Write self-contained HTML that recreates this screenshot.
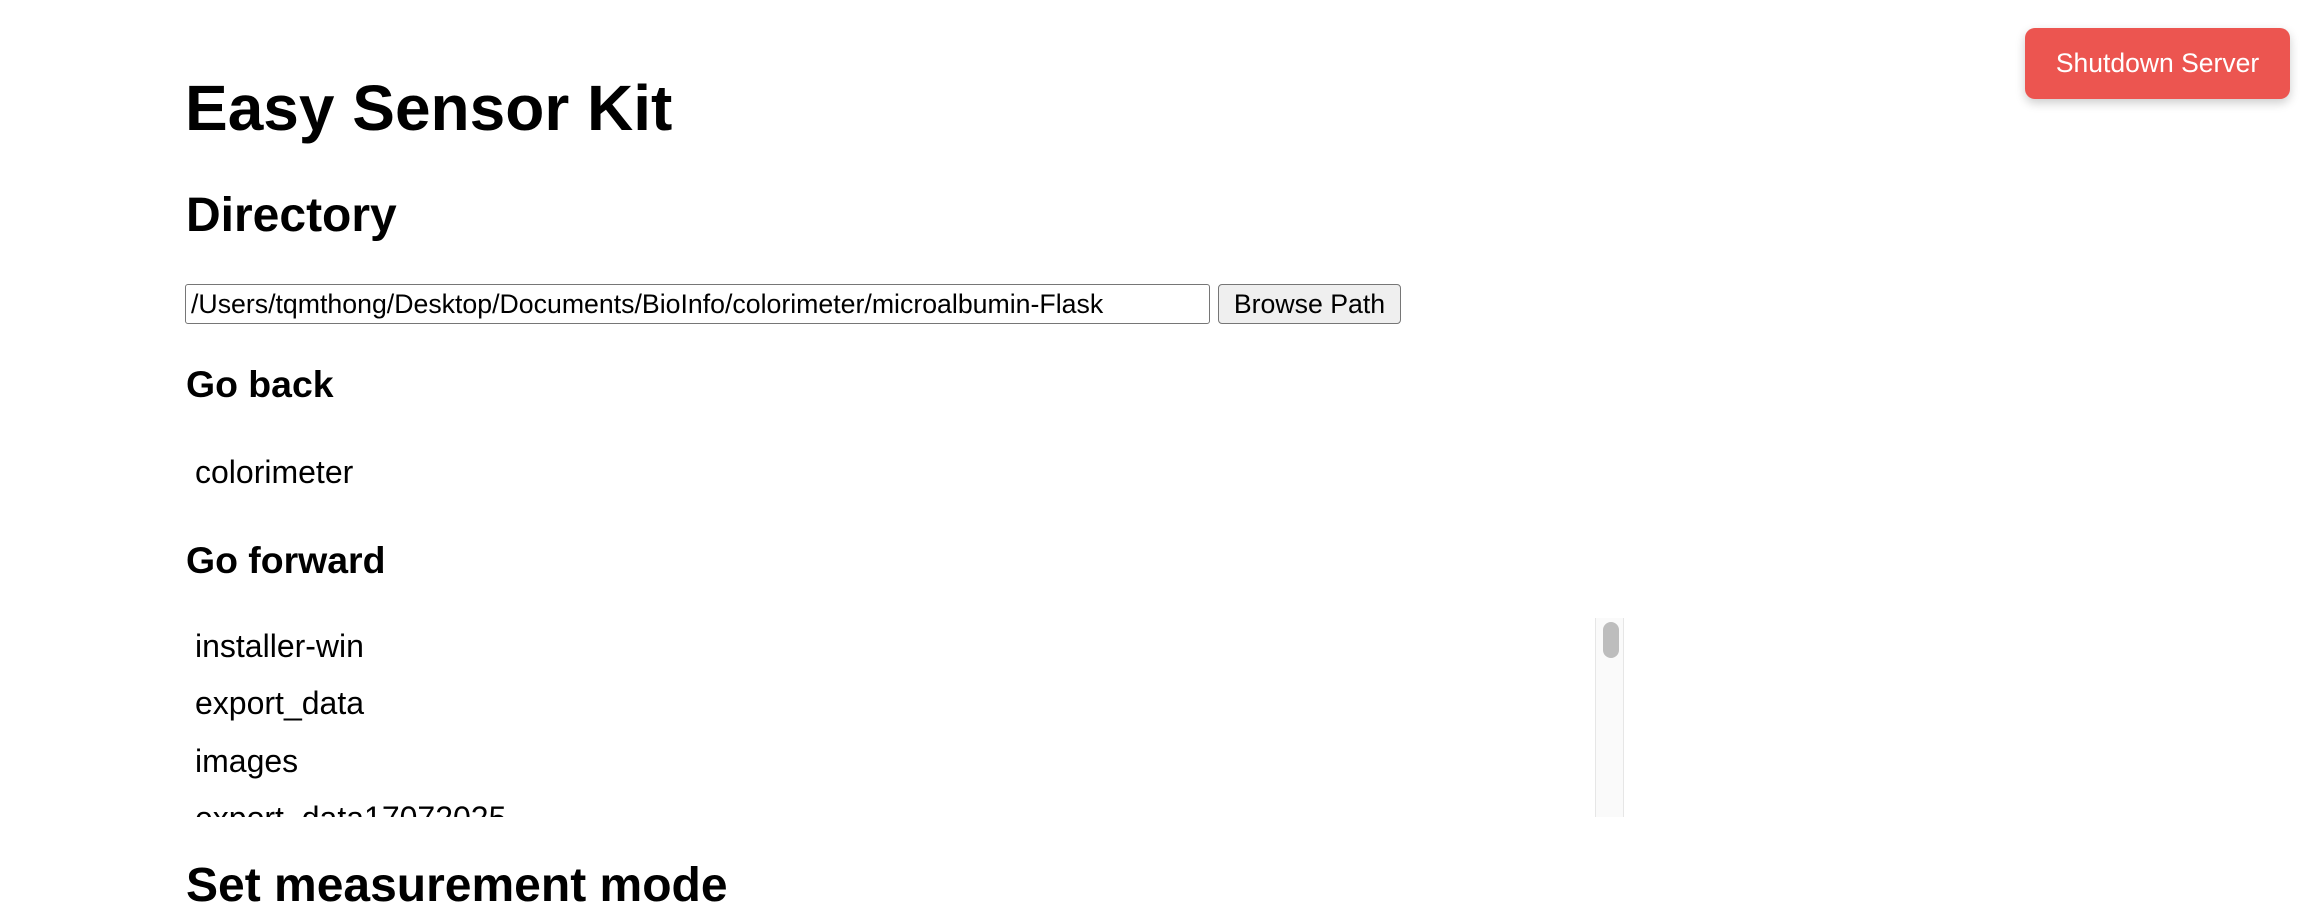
<!DOCTYPE html>
<html><head><meta charset="utf-8"><style>
body{margin:0;width:2312px;height:924px;background:#fff;position:relative;overflow:hidden;font-family:"Liberation Sans",Arial,sans-serif;color:#000}
.a{position:absolute;line-height:1;white-space:nowrap}
.b{font-weight:bold}
</style></head><body>
<div class="a" style="left:2025px;top:28px;width:265px;height:71px;background:#ec5550;border-radius:10px;box-shadow:0 4px 10px rgba(0,0,0,0.2);color:#fff;font-size:26.5px;display:flex;align-items:center;justify-content:center">Shutdown Server</div>
<div class="a b" style="left:185px;top:76px;font-size:64px">Easy Sensor Kit</div>
<div class="a b" style="left:186px;top:192px;font-size:48px">Directory</div>
<div class="a" style="left:185px;top:284px;width:1025px;height:40px;border:1px solid #767676;border-radius:3px;box-sizing:border-box;font-size:26.7px;padding-left:5px;display:flex;align-items:center">/Users/tqmthong/Desktop/Documents/BioInfo/colorimeter/microalbumin-Flask</div>
<div class="a" style="left:1218px;top:284px;width:183px;height:40px;border:1px solid #767676;border-radius:4px;box-sizing:border-box;background:#efefef;font-size:26.7px;display:flex;align-items:center;justify-content:center">Browse Path</div>
<div class="a b" style="left:186px;top:366px;font-size:37.4px">Go back</div>
<div class="a" style="left:195px;top:456px;font-size:32px">colorimeter</div>
<div class="a b" style="left:186px;top:542px;font-size:37.4px">Go forward</div>
<div class="a" style="left:186px;top:618px;width:1438px;height:199px;overflow:hidden">
  <div class="a" style="left:9px;top:12px;font-size:32px">installer-win</div>
  <div class="a" style="left:9px;top:69px;font-size:32px">export_data</div>
  <div class="a" style="left:9px;top:127px;font-size:32px">images</div>
  <div class="a" style="left:9px;top:184px;font-size:32px">export_data17072025</div>
  <div class="a" style="left:1409px;top:0;width:29px;height:199px;background:#fafafa;border-left:1px solid #e6e6e6;border-right:1px solid #e6e6e6;box-sizing:border-box"></div>
  <div class="a" style="left:1417px;top:4px;width:16px;height:36px;background:#bdbdbd;border-radius:8px"></div>
</div>
<div class="a b" style="left:186px;top:862px;font-size:48px">Set measurement mode</div>
</body></html>
